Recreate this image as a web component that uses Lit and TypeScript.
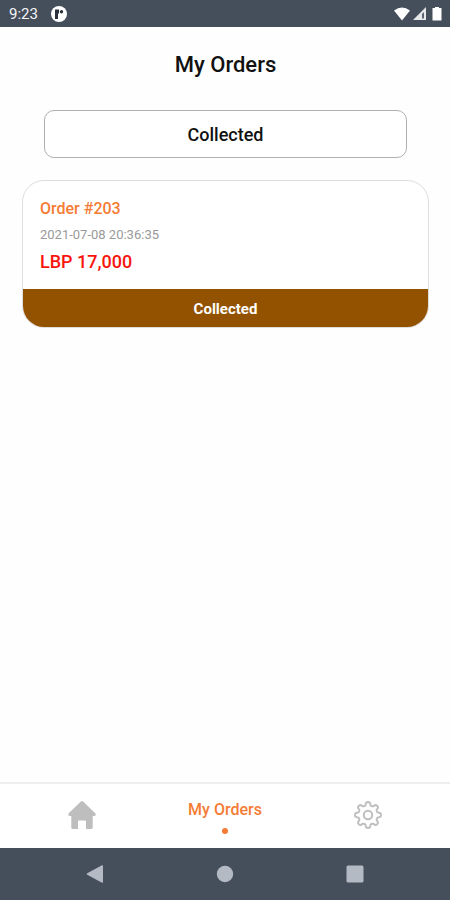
import { LitElement, html, css, svg } from "lit";
import { customElement, state } from "lit/decorators.js";

interface Order {
  id: number;
  date: string;
  total: string;
  status: string;
}

// Outline of an eight-toothed gear with rounded teeth, centred on 14,14.
function gearPath(): string {
  const points: string[] = [];
  const steps = 192;
  for (let i = 0; i < steps; i++) {
    const a = (i / steps) * Math.PI * 2;
    const r = 11.3 + 1.7 * Math.tanh(1.9 * Math.cos(8 * a));
    points.push(`${(14 + r * Math.cos(a)).toFixed(2)} ${(14 + r * Math.sin(a)).toFixed(2)}`);
  }
  return `M${points.join("L")}Z`;
}

const GEAR = gearPath();

@customElement("status-bar")
export class StatusBar extends LitElement {
  static styles = css`
    :host {
      display: flex;
      align-items: center;
      justify-content: space-between;
      height: 27px;
      padding: 0 8px 0 9px;
      box-sizing: border-box;
      background: #454e5b;
      color: #f4f5f6;
      font-size: 15px;
      line-height: 18px;
    }
    .group {
      display: flex;
      align-items: center;
    }
    .left {
      gap: 13px;
    }
    svg {
      display: block;
    }
  `;
  render() {
    return html`
      <div class="group left">
        <span>9:23</span>
        <svg width="16" height="16" viewBox="0 0 16 16" aria-hidden="true">
          <circle cx="8" cy="8" r="8" fill="#fff" />
          <path d="M4 3.500h4v4H7V13H4z" fill="#29313c" />
          <circle cx="10.500" cy="5.800" r="1.700" fill="#29313c" />
        </svg>
      </div>
      <div class="group">
        <svg width="48" height="16" viewBox="0 0 48 16" aria-hidden="true">
          <path d="M0 4.500Q8-1.500 16 4.500L8 14.500Z" fill="#fff" />
          <path d="M32 1v13H19z" fill="#e6e8ea" />
          <path d="M30 6v6.500h-2V8z" fill="#5b6470" />
          <path d="M41 1h4v1h2.500v12.500h-9V2H41z" fill="#fff" />
        </svg>
      </div>
    `;
  }
}

@customElement("order-card")
export class OrderCard extends LitElement {
  static properties = { order: { attribute: false } };
  declare order: Order;
  static styles = css`
    :host {
      display: block;
    }
    .card {
      border: 1px solid #dedede;
      border-radius: 22px;
      overflow: hidden;
      background: #fff;
    }
    .details {
      display: flex;
      flex-direction: column;
      gap: 4px;
      padding: 18px 17px 16px;
    }
    h2,
    p {
      margin: 0;
    }
    .number {
      font-size: 16px;
      line-height: 20px;
      font-weight: 500;
      color: #f57c35;
    }
    .date {
      font-size: 13px;
      line-height: 24px;
      color: #999;
    }
    .total {
      font-size: 18px;
      line-height: 22px;
      font-weight: 500;
      color: #f8140c;
    }
    .status {
      padding-top: 2px;
      background: #935200;
      color: #fff;
      font-size: 15px;
      line-height: 36px;
      font-weight: 700;
      text-align: center;
    }
  `;
  render() {
    const o = this.order;
    return html`
      <article class="card">
        <div class="details">
          <h2 class="number">Order #${o.id}</h2>
          <time class="date">${o.date}</time>
          <p class="total">${o.total}</p>
        </div>
        <p class="status">${o.status}</p>
      </article>
    `;
  }
}

@customElement("app-root")
export class AppRoot extends LitElement {
  @state() orders: Order[] = [
    { id: 203, date: "2021-07-08 20:36:35", total: "LBP 17,000", status: "Collected" },
  ];

  static styles = css`
    :host {
      display: flex;
      flex-direction: column;
      min-height: 100vh;
      background: #fefefe;
      color: #111;
      font-family: Roboto, "Liberation Sans", sans-serif;
    }
    button {
      font: inherit;
      color: inherit;
      margin: 0;
      padding: 0;
      border: 0;
      background: none;
      cursor: pointer;
    }
    svg {
      display: block;
    }
    main {
      flex: 1;
      padding: 23px 21px 22px 22px;
    }
    h1 {
      margin: 0;
      font-size: 22px;
      line-height: 30px;
      font-weight: 500;
      text-align: center;
    }
    .filter {
      padding: 30px 22px 22px;
      display: flex;
    }
    .filter button {
      flex: 1;
      height: 48px;
      padding-top: 2px;
      border: 1px solid #b0b0b0;
      border-radius: 10px;
      background: #fff;
      font-size: 18px;
      line-height: 24px;
      font-weight: 500;
    }
    .list {
      display: grid;
      gap: 22px;
    }
    .tabs {
      display: grid;
      grid-template-columns: repeat(3, 1fr);
      height: 66px;
      box-sizing: border-box;
      padding: 0 11px;
      border-top: 2px solid #eee;
      background: #fff;
    }
    .tabs button {
      display: flex;
      flex-direction: column;
      align-items: center;
      justify-content: center;
      gap: 8px;
      color: #bebebe;
    }
    .tabs .icon {
      padding-bottom: 2px;
    }
    .tabs .active {
      padding-top: 1px;
      color: #f57c35;
      font-size: 16px;
      line-height: 20px;
      font-weight: 500;
    }
    .dot {
      width: 6px;
      height: 6px;
      border-radius: 50%;
      background: currentColor;
    }
    .system {
      display: grid;
      grid-template-columns: repeat(3, 1fr);
      height: 52px;
      padding: 0 30px;
      background: #454e5b;
    }
    .system button {
      display: flex;
      align-items: center;
      justify-content: center;
      color: #b4bac4;
    }
  `;

  private systemButton(label: string, shape: unknown) {
    return html`<button aria-label=${label}>
      <svg width="18" height="18" viewBox="0 0 18 18" fill="currentColor">${shape}</svg>
    </button>`;
  }

  render() {
    return html`
      <status-bar></status-bar>
      <main>
        <h1>My Orders</h1>
        <div class="filter"><button>Collected</button></div>
        <div class="list">
          ${this.orders.map((o) => html`<order-card .order=${o}></order-card>`)}
        </div>
      </main>
      <nav class="tabs" aria-label="Main">
        <button class="icon" aria-label="Home">
          <svg width="28" height="28" viewBox="0 0 28 28" fill="currentColor">
            <path
              d="M12.600.700Q14-.600 15.400.700L27.300 12.300Q28.600 14.800 26 15H24.700V26.500Q24.700 28 23.200 28H18V20.500Q18 19.500 17 19.500H11Q10 19.500 10 20.500V28H4.800Q3.300 28 3.300 26.500V15H2Q-.600 14.800.700 12.300Z"
            />
          </svg>
        </button>
        <button class="active" aria-current="page">
          <span>My Orders</span>
          <span class="dot"></span>
        </button>
        <button class="icon" aria-label="Settings">
          <svg width="28" height="28" viewBox="0 0 28 28" fill="none" stroke="currentColor" stroke-width="2">
            <path d=${GEAR} stroke-linejoin="round" />
            <circle cx="14" cy="14" r="4.200" />
          </svg>
        </button>
      </nav>
      <nav class="system" aria-label="System">
        ${this.systemButton("Back", svg`<path d="M1.200 8.200L16 .300Q17 0 17 1V17Q17 18 16 17.700L1.200 9.800Q0 9 1.200 8.200Z" />`)}
        ${this.systemButton("Home screen", svg`<circle cx="9" cy="9" r="8.200" />`)}
        ${this.systemButton("Recent apps", svg`<rect x=".500" y=".500" width="17" height="17" rx="1.500" />`)}
      </nav>
    `;
  }
}
